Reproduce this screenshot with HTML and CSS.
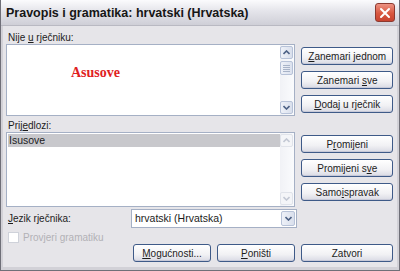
FILE: index.html
```html
<!DOCTYPE html>
<html lang="hr">

<head>
    <meta charset="UTF-8">
    <title>Pravopis i gramatika</title>
    <link rel="stylesheet" href="styles.css">
</head>

<body>
    <div class="window">
        <div class="titlebar">
            <span class="title">Pravopis i gramatika: hrvatski (Hrvatska)</span>
            <button class="close">
                <svg width="12" height="12" viewBox="0 0 12 12">
                    <path d="M2 2 L10 10 M10 2 L2 10" stroke="#fff" stroke-width="2" stroke-linecap="round" />
                </svg>
            </button>
        </div>

        <div class="content">
            <div class="label">Nije <u>u</u> rječniku:</div>
            <div class="row">
                <div class="box textbox">
                    <div class="text-area"><span class="wrong">Asusove</span></div>
                    <div class="scrollbar">
                        <span class="sb-btn">
                            <svg width="7" height="5" viewBox="0 0 7 5"><path d="M0.5 4 L3.5 1 L6.5 4" fill="none" stroke="#4d6185" stroke-width="1.6" /></svg>
                        </span>
                        <span class="sb-thumb"><i></i><i></i><i></i><i></i></span>
                        <span class="sb-fill"></span>
                        <span class="sb-btn">
                            <svg width="7" height="5" viewBox="0 0 7 5"><path d="M0.5 1 L3.5 4 L6.5 1" fill="none" stroke="#4d6185" stroke-width="1.6" /></svg>
                        </span>
                    </div>
                </div>
                <div class="buttons">
                    <button class="btn"><u>Z</u>anemari jednom</button>
                    <button class="btn">Zanemari <u>s</u>ve</button>
                    <button class="btn"><u>D</u>odaj u rječnik</button>
                </div>
            </div>

            <div class="label second">Prij<u>e</u>dlozi:</div>
            <div class="row">
                <div class="box listbox">
                    <div class="list">
                        <div class="item selected">Isusove</div>
                    </div>
                    <div class="scrollbar disabled">
                        <span class="sb-btn">
                            <svg width="7" height="5" viewBox="0 0 7 5"><path d="M0.5 4 L3.5 1 L6.5 4" fill="none" stroke="#c3c8d4" stroke-width="1.6" /></svg>
                        </span>
                        <span class="sb-fill"></span>
                        <span class="sb-btn">
                            <svg width="7" height="5" viewBox="0 0 7 5"><path d="M0.5 1 L3.5 4 L6.5 1" fill="none" stroke="#c3c8d4" stroke-width="1.6" /></svg>
                        </span>
                    </div>
                </div>
                <div class="buttons">
                    <button class="btn">P<u>r</u>omijeni</button>
                    <button class="btn">Promijeni s<u>v</u>e</button>
                    <button class="btn">Samo<u>i</u>spravak</button>
                </div>
            </div>

            <div class="lang-row">
                <span class="lang-label"><u>J</u>ezik rječnika:</span>
                <div class="select">
                    <span class="select-text">hrvatski (Hrvatska)</span>
                    <span class="select-btn">
                        <svg width="7" height="5" viewBox="0 0 7 5"><path d="M0.5 1 L3.5 4 L6.5 1" fill="none" stroke="#4d6185" stroke-width="1.6" /></svg>
                    </span>
                </div>
            </div>

            <div class="check-row">
                <span class="checkbox"></span>
                <span>Provjeri gramatiku</span>
            </div>

            <div class="bottom-row">
                <button class="btn wide"><u>M</u>ogućnosti...</button>
                <button class="btn wide"><u>P</u>oništi</button>
                <button class="btn">Zatvori</button>
            </div>
        </div>
    </div>
</body>

</html>
```

FILE: styles.css
```css
* {
    margin: 0;
    padding: 0;
    box-sizing: border-box;
}

body {
    width: 400px;
    height: 271px;
    overflow: hidden;
    font-family: "Liberation Sans", Arial, sans-serif;
    font-size: 10px;
    color: #1c1c1c;
    background: #fff;
}

.window {
    width: 400px;
    height: 271px;
    background: #e6e5e9;
    border: 1px solid #6f6f78;
    border-top: none;
    box-shadow: inset 2px 0 0 #d2d1d7, inset -2px 0 0 #d2d1d7, inset 0 -3px 0 #d2d1d7;
    display: flex;
    flex-direction: column;
}

/* title */
.titlebar {
    height: 26px;
    display: flex;
    align-items: center;
    justify-content: space-between;
    padding: 0 4px 0 5px;
    background: linear-gradient(#fbfbfd, #e4e4ea 45%, #cfcfd7);
    border-bottom: 1px solid #b9b9c2;
}

.title {
    font-size: 12.5px;
    font-weight: bold;
    color: #161616;
}

.close {
    width: 20px;
    height: 19px;
    border: 1px solid #8c3a30;
    border-radius: 3px;
    background: linear-gradient(#ec9283, #d9573f 55%, #c84330);
    display: flex;
    align-items: center;
    justify-content: center;
}

/* content */
.content {
    padding: 5px 6px 0 5px;
    display: flex;
    flex-direction: column;
}

.label {
    height: 13px;
    line-height: 13px;
    padding-left: 2px;
}

.label.second {
    margin-top: 3px;
}

.row {
    display: flex;
    gap: 6px;
}

.box {
    width: 291px;
    background: #fff;
    border: 1px solid #a5b0c5;
    display: flex;
}

.textbox {
    height: 72px;
}

.listbox {
    height: 75px;
}

.text-area {
    flex: 1;
    padding: 20px 0 0 64px;
}

.wrong {
    font-family: "Liberation Serif", "Times New Roman", serif;
    font-size: 14px;
    font-weight: bold;
    color: #e0211f;
}

.list {
    flex: 1;
    padding: 1px 0 0 1px;
}

.item {
    height: 13px;
    line-height: 13px;
    padding-left: 1px;
    font-size: 10.5px;
}

.item.selected {
    background: #c8c8cc;
}

/* scrollbar */
.scrollbar {
    width: 14px;
    display: flex;
    flex-direction: column;
    padding: 1px 1px 1px 0;
    background: linear-gradient(90deg, #f1f2f6, #fafbfd);
}

.sb-btn {
    height: 13px;
    border: 1px solid #b7c2d8;
    border-radius: 2px;
    background: linear-gradient(90deg, #eef1f8, #d9dfec);
    display: flex;
    align-items: center;
    justify-content: center;
}

.sb-thumb {
    height: 14px;
    margin-top: 2px;
    border: 1px solid #b7c2d8;
    border-radius: 2px;
    background: linear-gradient(90deg, #eef1f8, #dbe1ee);
    display: flex;
    flex-direction: column;
    align-items: center;
    justify-content: center;
    gap: 1px;
}

.sb-thumb i {
    width: 7px;
    height: 1px;
    background: #a8b3c8;
}

.sb-fill {
    flex: 1;
}

.scrollbar.disabled .sb-btn {
    border-color: #e0e3ea;
    background: #f4f5f8;
}

/* buttons */
.buttons {
    width: 92px;
    display: flex;
    flex-direction: column;
    gap: 6px;
    padding-top: 3px;
}

.btn {
    height: 18px;
    font-family: inherit;
    font-size: 10px;
    color: #1c1c1c;
    border: 1px solid #3e5a88;
    border-radius: 3px;
    background: linear-gradient(#ffffff, #f1f1f4 60%, #d9dae4);
    box-shadow: inset 0 -1px 0 #c7c9d8;
}

/* language */
.lang-row {
    display: flex;
    align-items: center;
    height: 20px;
    margin-top: 1px;
}

.lang-label {
    width: 125px;
    padding-left: 2px;
}

.select {
    width: 166px;
    height: 19px;
    background: #fff;
    border: 1px solid #a5b0c5;
    display: flex;
    align-items: center;
    padding: 1px;
}

.select-text {
    flex: 1;
    padding-left: 2px;
    font-size: 10.5px;
}

.select-btn {
    width: 14px;
    height: 15px;
    border: 1px solid #b7c2d8;
    border-radius: 2px;
    background: linear-gradient(90deg, #eef1f8, #d9dfec);
    display: flex;
    align-items: center;
    justify-content: center;
}

.check-row {
    display: flex;
    align-items: center;
    gap: 4px;
    height: 14px;
    margin-top: 2px;
    padding-left: 2px;
    color: #b2b1b6;
}

.checkbox {
    width: 11px;
    height: 11px;
    background: #fff;
    border: 1px solid #cfd2da;
}

.bottom-row {
    display: flex;
    justify-content: flex-end;
    gap: 6px;
    margin-top: 0;
}

.bottom-row .btn {
    width: 92px;
}

.bottom-row .btn.wide {
    width: 78px;
}
```
